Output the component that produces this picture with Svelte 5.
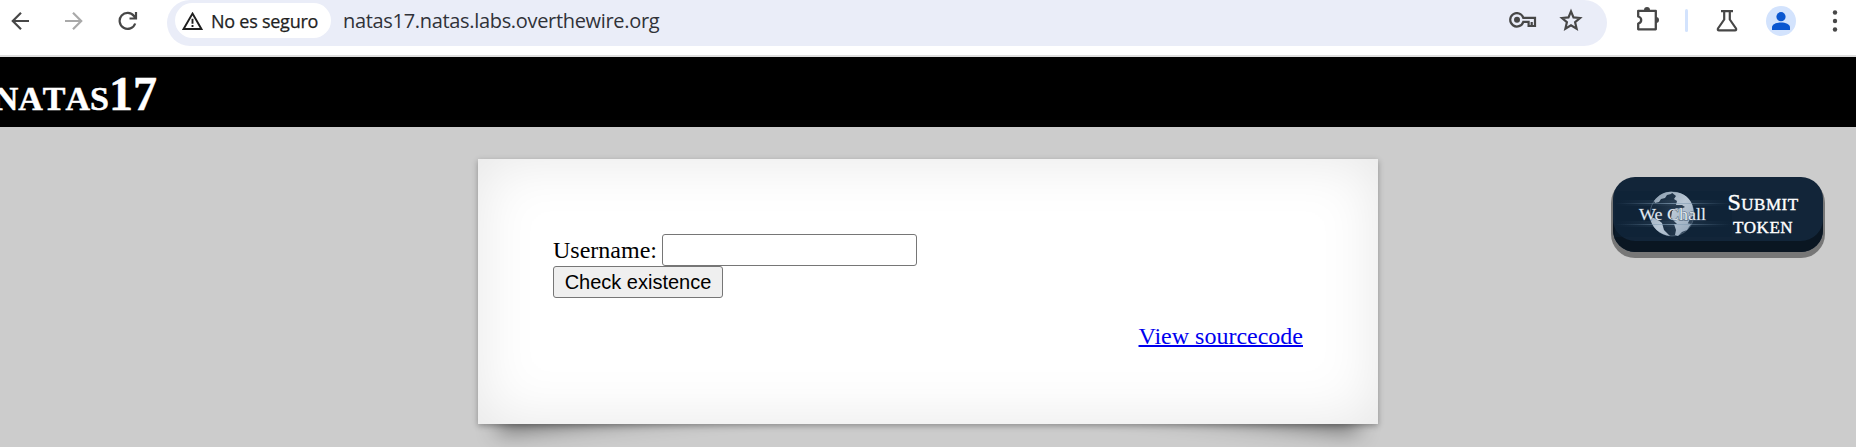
<script>
  let username = $state('');
</script>

<div class="page">
  <div class="toolbar">
    <svg class="nav" width="20" height="20" viewBox="0 0 20 20"><path d="M19 10H3M11 1.8 2.8 10l8.2 8.2" /></svg>
    <svg class="nav off" width="20" height="20" viewBox="0 0 20 20"><path d="M1 10h16M9 1.8l8.2 8.2L9 18.2" /></svg>
    <svg class="nav" width="20" height="20" viewBox="0 0 20 20"><path d="M17.2 12.5A8 8 0 1 1 16 5l1.7 2.3M18 1v6.5h-6.5" /></svg>
    <div class="omnibox">
      <div class="chip">
        <svg width="21" height="18" viewBox="0 0 21 18"><path d="M10.5 1.6 19.4 17H1.600z" fill="none" stroke="#1f1f1f" stroke-width="1.900" /><path d="M10.500 6.800v5M10.500 13v2" stroke="#1f1f1f" stroke-width="1.900" /></svg>
        <span>No es seguro</span>
      </div>
      <span class="url">natas17.natas.labs.overthewire.org</span>
      <svg class="key" width="28" height="16" viewBox="0 0 28 16"><path d="M14.300 5.800H26v8.200h-6.400v-4.200h-5.300a6.700 6.700 0 1 1 0-4z" /><path d="M22.700 10v4" /><circle cx="8" cy="7.700" r="3" fill="#474747" stroke="none" /></svg>
      <svg class="star" width="24" height="24" viewBox="0 0 24 24"><path d="m12 3.400 2.500 6 6.500.6-4.900 4.200 1.500 6.400-5.600-3.400-5.600 3.400 1.500-6.400L3 10l6.500-.6z" /></svg>
    </div>
    <svg class="puzzle" width="26" height="26" viewBox="0 0 26 26"><path d="M3.200 4.800h17.600v18.500H3.200v-5.800c4-1 4-6 0-7z" fill="none" stroke="#474747" stroke-width="2.300" stroke-linejoin="round" /><path d="M9 4a3 3 0 0 1 6 0zM21 11a3 3 0 0 1 0 6z" fill="#474747" /></svg>
    <i class="sep"></i>
    <svg class="flask" width="22" height="22" viewBox="0 0 22 22"><path d="M5 1.200h12M8.200 1.500v8L2 18.500q-.7 1.800 1 1.800h16q1.700 0 1-1.800L13.800 9.500v-8" /></svg>
    <svg class="avatar" width="30" height="30" viewBox="0 0 30 30"><circle cx="15" cy="15" r="15" fill="#d3e3fd" /><circle cx="15" cy="10.700" r="4.600" fill="#0b57d0" /><path d="M6 24v-2.500c0-6.600 18-6.600 18 0V24z" fill="#0b57d0" /></svg>
    <svg class="dots" width="6" height="24" viewBox="0 0 6 24"><circle cx="3" cy="3.500" r="2.200" /><circle cx="3" cy="12" r="2.200" /><circle cx="3" cy="20.500" r="2.200" /></svg>
  </div>

  <h1><span>natas17</span></h1>

  <main>
    <section class="content">
      <form onsubmit={(e) => e.preventDefault()}>
        <div class="row"><label for="username">Username:</label><input id="username" bind:value={username} /></div>
        <button>Check existence</button>
      </form>
      <div class="source"><a href="#source">View sourcecode</a></div>
    </section>

    <div class="token">
      <svg class="logo" width="119" height="48" viewBox="0 0 119 48">
        <defs>
          <linearGradient id="beam"><stop offset="0" stop-color="#52708c" stop-opacity="0" /><stop offset=".5" stop-color="#8ba5bb" /><stop offset="1" stop-color="#52708c" stop-opacity="0" /></linearGradient>
          <linearGradient id="land" x2="1" y2="1"><stop offset="0" stop-color="#8497a9" /><stop offset=".5" stop-color="#b9c7d5" /><stop offset="1" stop-color="#8fa2b6" /></linearGradient>
          <linearGradient id="sea" x2="1"><stop offset="0" stop-color="#13273b" /><stop offset="1" stop-color="#45596e" /></linearGradient>
        </defs>
        <rect y="1" width="117" height="46" fill="#0d2136" opacity=".45" />
        <rect y="10" width="116" height="6" fill="url(#beam)" opacity=".16" />
        <rect y="31" width="116" height="6" fill="url(#beam)" opacity=".16" />
        <circle cx="57" cy="24" r="22" fill="url(#sea)" fill-opacity=".6" stroke="#5b7084" stroke-width=".7" />
        <path fill="url(#land)" d="M39 11C44 4 52 1 58 2l-2 2-4 1-2 3-4 1-2 3-4 1zM56 2c12-1 21 7 22 16l1 6-4 5-3 6-4 2-6-3-6-6 1-7 4-3 5 1 4-2-3-2-6 0 1-4-3-2 2-3zM35 27l7 2 5 4 2 7 6 6c-10-1-19-9-20-19zM59 34l12-1 5 1-4 6-5 2-4 4-3-1 1-5z" />
        <rect x="0" y="13" width="116" height="1" fill="url(#beam)" opacity=".7" />
        <rect x="0" y="34" width="116" height="1" fill="url(#beam)" opacity=".7" />
        <text x="24" y="29.500" textLength="67" lengthAdjust="spacingAndGlyphs">We Chall</text>
      </svg>
      <div class="label">Submit token</div>
    </div>
  </main>
</div>

<style>
  :global(body) { overflow: hidden; }
  .page { width: 1856px; height: 447px; overflow: hidden; background: #ccc; font: 24px "Liberation Serif", serif; color: #000; }
  .toolbar { height: 57px; box-sizing: border-box; border-bottom: 2px solid #dedede; background: #fff; display: flex; align-items: flex-start; padding-left: 10px; }
  svg { flex: none; display: block; }
  .nav { margin: 11px 34px 0 0; fill: none; stroke: #474747; stroke-width: 2.2; }
  .off { stroke: #a9a9a9; }
  .omnibox { box-sizing: border-box; width: 1440px; height: 46px; margin-left: -5px; background: #eaedf8; border-radius: 23px; display: flex; align-items: flex-start; }
  .chip { height: 35px; width: 156px; box-sizing: border-box; margin: 3px 0 0 8px; padding-left: 7px; border-radius: 18px; background: #fff; display: flex; align-items: center; gap: 8px; font: 500 18px "Open Sans", sans-serif; letter-spacing: -.25px; color: #1f1f1f; -webkit-text-stroke: .25px #1f1f1f; white-space: nowrap; }
  .url { margin: 7px 0 0 12px; font: 20px/28px "Open Sans", sans-serif; letter-spacing: -.32px; color: #303238; }
  .key { margin: 12px 22px 0 auto; }
  .star { margin: 8px 24px 0 0; }
  .key, .star, .flask { fill: none; stroke: #474747; stroke-width: 2.2; }
  .puzzle { margin: 6px 0 0 28px; }
  .sep { width: 3px; height: 23px; margin: 9px 0 0 24px; background: #d3e3fd; border-radius: 2px; }
  .flask { margin: 10px 0 0 28px; }
  .avatar { margin: 6px 0 0 28px; }
  .dots { margin: 9px 0 0 36px; fill: #474747; }
  h1 { margin: 0; height: 70px; background: #000; color: #fff; font-size: 48px; line-height: 73px; font-variant: small-caps; font-kerning: none; -webkit-text-stroke: .5px #fff; }
  h1 span { display: block; width: 157px; direction: rtl; white-space: nowrap; }
  main { height: 320px; display: flex; align-items: flex-start; position: relative; z-index: 0; }
  .content { position: relative; box-sizing: border-box; width: 900px; height: 265px; margin: 32px 0 0 478px; padding: 75px; background: #fff; box-shadow: 0 1.5px 6px rgba(0,0,0,.3), 0 0 60px rgba(0,0,0,.1) inset; }
  .content::before, .content::after { content: ""; position: absolute; z-index: -2; bottom: 18px; left: 33px; width: 70%; height: 40%; max-width: 300px; max-height: 150px; box-shadow: 0 12px 22px rgba(0,0,0,.45); transform: skew(-15deg) rotate(-6deg); }
  .content::after { left: auto; right: 33px; transform: skew(15deg) rotate(6deg); }
  .row { display: flex; gap: 5px; height: 32px; line-height: 32px; }
  input { box-sizing: border-box; width: 255px; height: 32px; border: 1px solid #767676; border-radius: 3px; background: #fff; padding: 2px 4px; font: 20px "Liberation Sans", sans-serif; }
  button { display: block; box-sizing: border-box; width: 170px; height: 32px; border: 1px solid #767676; border-radius: 3px; background: #efefef; color: #000; padding: 0; font: 20px "Liberation Sans", sans-serif; white-space: nowrap; }
  .source { text-align: right; margin-top: 25px; line-height: 27px; }
  a { color: #00e; text-decoration-thickness: 2px; }
  .token { box-sizing: border-box; width: 210px; height: 75px; margin: 50px 0 0 235px; border-radius: 22px; background: #122539; box-shadow: inset 0 -11px 0 #0a1622, 0 4px 0 2px #777; display: flex; align-items: flex-start; color: #fff; }
  .logo { margin: 13px 0 0 2px; }
  .logo text { font: 17px "Liberation Serif", serif; fill: #e2e9f0; stroke: #40546a; stroke-width: .8px; paint-order: stroke; }
  .label { width: 84px; margin: 14px 0 0 -13px; text-align: center; font-size: 24px; line-height: 23px; font-variant: small-caps; font-kerning: none; letter-spacing: .5px; -webkit-text-stroke: .4px #fff; }
</style>
